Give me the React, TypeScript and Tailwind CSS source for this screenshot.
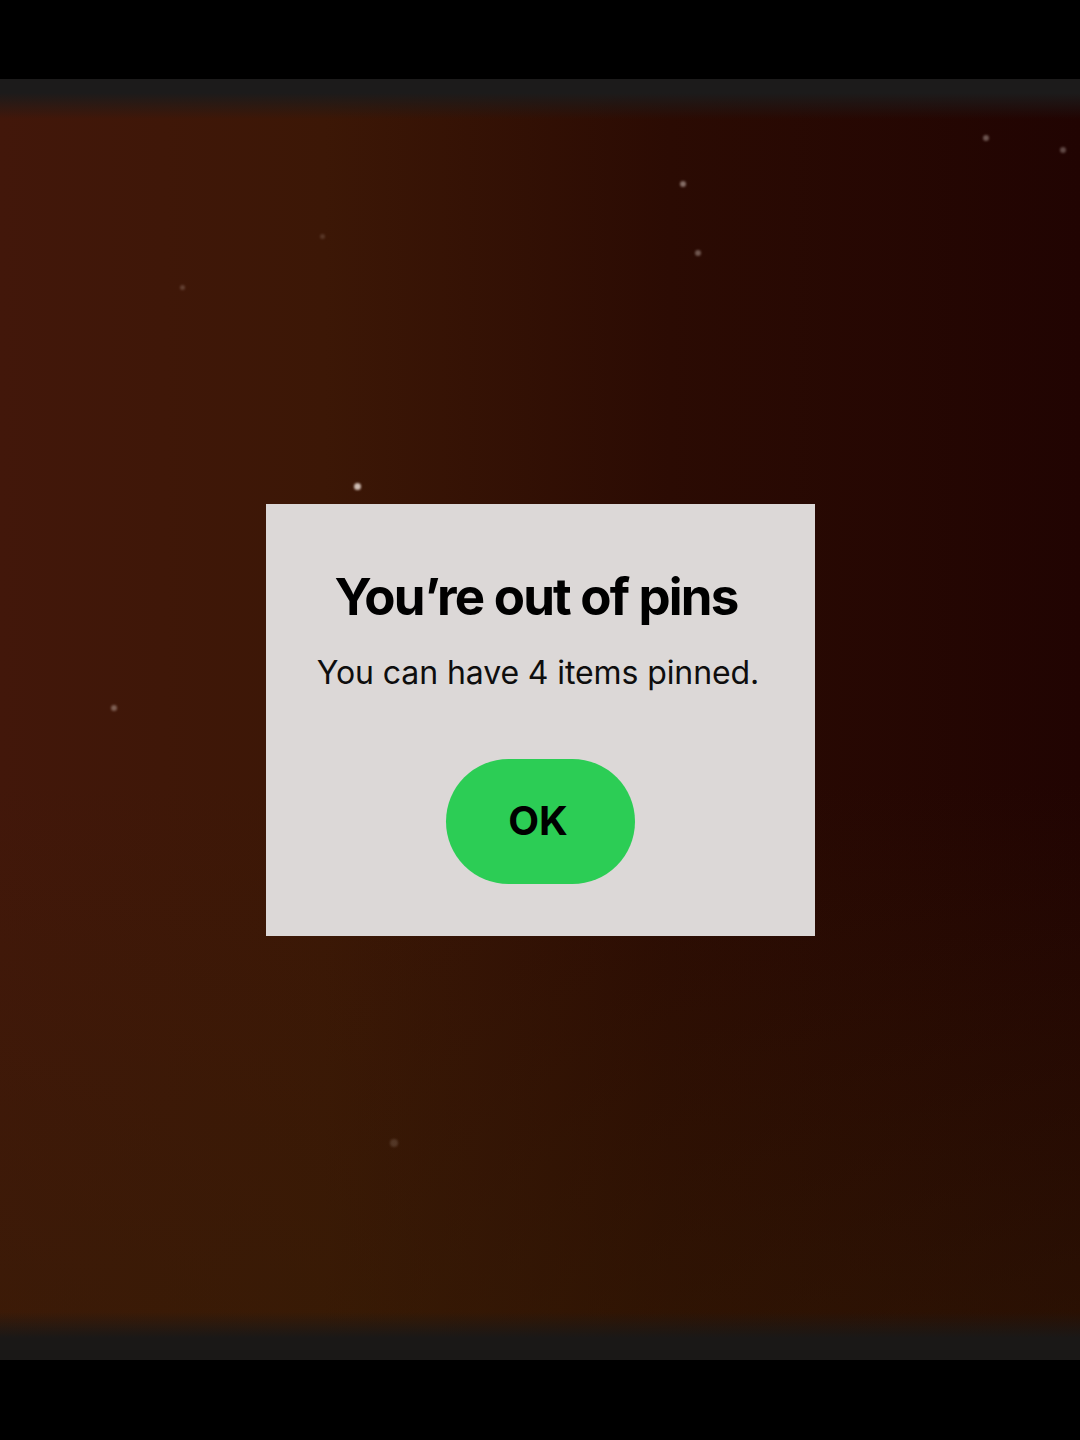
import React from 'react';

const stars = [
  { x: 354, y: 404, s: 7, o: 0.8 },
  { x: 680, y: 102, s: 6, o: 0.45 },
  { x: 695, y: 171, s: 6, o: 0.35 },
  { x: 983, y: 56, s: 6, o: 0.35 },
  { x: 1060, y: 68, s: 6, o: 0.3 },
  { x: 111, y: 626, s: 6, o: 0.35 },
  { x: 180, y: 206, s: 5, o: 0.2 },
  { x: 320, y: 155, s: 5, o: 0.15 },
  { x: 390, y: 1060, s: 8, o: 0.15 },
];

const App: React.FC = () => {
  return (
    <div className="w-[1080px] h-[1440px] flex flex-col bg-black" style={{ fontFamily: 'Inter, "Noto Sans", sans-serif' }}>
      <div className="h-[79px] bg-black" />
      <div className="relative flex-1 flex items-center justify-center overflow-hidden bg-[linear-gradient(to_right,#42170a_0%,#3c1706_30%,#2b0b03_62%,#210402_100%)]">
        <div className="absolute inset-0 bg-[linear-gradient(to_top,rgba(52,30,4,0.5)_0%,transparent_45%)]" />
        <div className="absolute inset-0 bg-[linear-gradient(to_bottom,#1c1b1b_0px,#1c1b1b_14px,transparent_40px,transparent_calc(100%-48px),#1a1817_calc(100%-22px),#1a1817_100%)]" />
        {stars.map((st, i) => (
          <div
            key={i}
            className="absolute rounded-full bg-[#f3e6df] blur-[1px]"
            style={{ left: st.x, top: st.y, width: st.s, height: st.s, opacity: st.o }}
          />
        ))}
        <div className="relative w-[549px] h-[432px] bg-[#dcd8d7] flex flex-col items-center">
          <h1 className="mt-[64px] pr-[8px] text-[51px] leading-[58px] font-bold tracking-[-1.8px] text-black">You’re out of pins</h1>
          <p className="mt-[27px] pr-[4px] text-[32px] leading-[40px] text-[#0e0e0e] tracking-[-0.1px]">You can have 4 items pinned.</p>
          <button className="mt-[66px] pr-[4px] w-[189px] h-[125px] rounded-full bg-[#2ccd55] text-black text-[40px] font-bold">
            OK
          </button>
        </div>
      </div>
      <div className="h-[80px] bg-black" />
    </div>
  );
};

export default App;
